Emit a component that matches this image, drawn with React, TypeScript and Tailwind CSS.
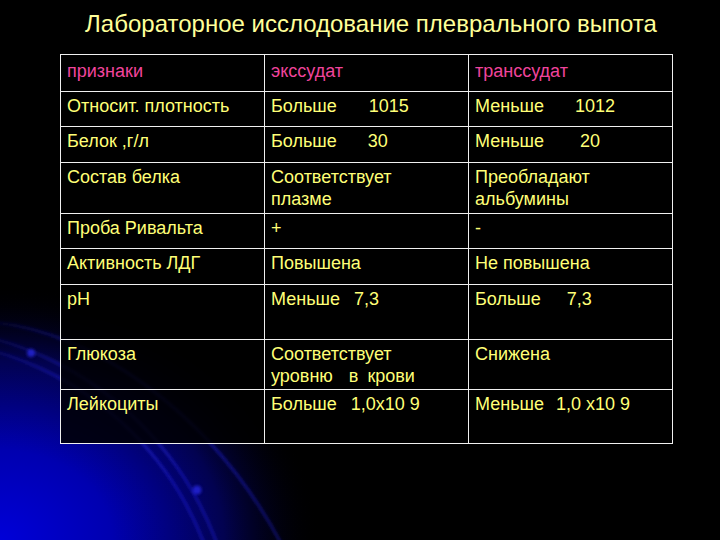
import React from 'react'

type Row = {
  h: string
  cells: React.ReactNode[]
}

const gap = (w: string, text: string) => <span className={w}>{text}</span>

const rows: Row[] = [
  {
    h: 'h-[35px]',
    cells: [
      'Относит. плотность',
      <>Больше{gap('ml-[32px]', '1015')}</>,
      <>Меньше{gap('ml-[31px]', '1012')}</>,
    ],
  },
  {
    h: 'h-[36px]',
    cells: [
      'Белок ,г/л',
      <>Больше{gap('ml-[31px]', '30')}</>,
      <>Меньше{gap('ml-[36px]', '20')}</>,
    ],
  },
  {
    h: 'h-[51px]',
    cells: [
      'Состав белка',
      <>Соответствует<br />плазме</>,
      <>Преобладают<br />альбумины</>,
    ],
  },
  { h: 'h-[35px]', cells: ['Проба Ривальта', '+', '-'] },
  { h: 'h-[36px]', cells: ['Активность ЛДГ', 'Повышена', 'Не повышена'] },
  {
    h: 'h-[55px]',
    cells: [
      'pH',
      <>Меньше{gap('ml-[14px]', '7,3')}</>,
      <>Больше{gap('ml-[26px]', '7,3')}</>,
    ],
  },
  {
    h: 'h-[50px]',
    cells: [
      'Глюкоза',
      <>
        Соответствует
        <br />
        уровню{gap('ml-[16px]', 'в')}
        {gap('ml-[9px]', 'крови')}
      </>,
      'Снижена',
    ],
  },
  {
    h: 'h-[54px]',
    cells: [
      'Лейкоциты',
      <>Больше{gap('ml-[14px]', '1,0х10 9')}</>,
      <>Меньше{gap('ml-[12px]', '1,0 х10 9')}</>,
    ],
  },
]

// blue glow + arcs in the lower-left corner of the slide
function Backdrop() {
  return (
    <svg className="absolute inset-0 w-full h-full" viewBox="0 0 720 540">
      <defs>
        <radialGradient
          id="glow"
          cx="0"
          cy="540"
          r="320"
          gradientUnits="userSpaceOnUse"
          gradientTransform="translate(0 540) scale(1 0.8) translate(0 -540)"
        >
          <stop offset="0" stopColor="#0000d8" />
          <stop offset="0.35" stopColor="#0000b0" />
          <stop offset="0.7" stopColor="#020250" />
          <stop offset="1" stopColor="#000000" stopOpacity="0" />
        </radialGradient>
        <linearGradient id="fade" x1="0" y1="310" x2="260" y2="540" gradientUnits="userSpaceOnUse">
          <stop offset="0" stopColor="#2020e0" stopOpacity="0.1" />
          <stop offset="0.35" stopColor="#2a2af0" stopOpacity="0.6" />
          <stop offset="1" stopColor="#2020e0" stopOpacity="0.45" />
        </linearGradient>
        <filter id="soft">
          <feGaussianBlur stdDeviation="1.4" />
        </filter>
      </defs>
      <rect width="720" height="540" fill="url(#glow)" />
      <g fill="none" stroke="url(#fade)" filter="url(#soft)">
        <circle cx="-93" cy="657" r="318" strokeWidth="2.5" />
        <circle cx="-93" cy="657" r="330" strokeWidth="2.5" />
        <path d="M -10 322 C 90 330, 210 410, 282 545" strokeWidth="2.5" />
      </g>
      <g fill="#2828e0" filter="url(#soft)" opacity="0.8">
        <circle cx="31" cy="353" r="4" />
        <circle cx="197" cy="490" r="4.5" />
      </g>
    </svg>
  )
}

export default function App() {
  return (
    <div
      className="relative w-[720px] h-[540px] overflow-hidden bg-black"
      style={{ fontFamily: '"Liberation Sans", Arial, sans-serif' }}
    >
      <Backdrop />
      <div className="relative">
        <h1 className="pt-[10px] pl-[22px] text-center text-[24px] leading-[28px] font-normal text-[#ffff99]">
          Лабораторное исслодование плеврального выпота
        </h1>

        <table className="mt-[16px] ml-[60px] w-[613px] table-fixed border-collapse bg-black/85 text-[18px] leading-[22px] text-[#ffff77]">
          <tbody>
            <tr className="h-[37px]">
              {['признаки', 'экссудат', 'транссудат'].map((t) => (
                <td key={t} className="border border-[#f0f0f0] align-top pl-[6px] pt-[5px] text-[#f0449c]">
                  {t}
                </td>
              ))}
            </tr>
            {rows.map((row, i) => (
              <tr key={i} className={row.h}>
                {row.cells.map((c, j) => (
                  <td key={j} className="border border-[#f0f0f0] align-top pl-[6px] pt-[3px] whitespace-nowrap">
                    {c}
                  </td>
                ))}
              </tr>
            ))}
          </tbody>
        </table>
      </div>
    </div>
  )
}
